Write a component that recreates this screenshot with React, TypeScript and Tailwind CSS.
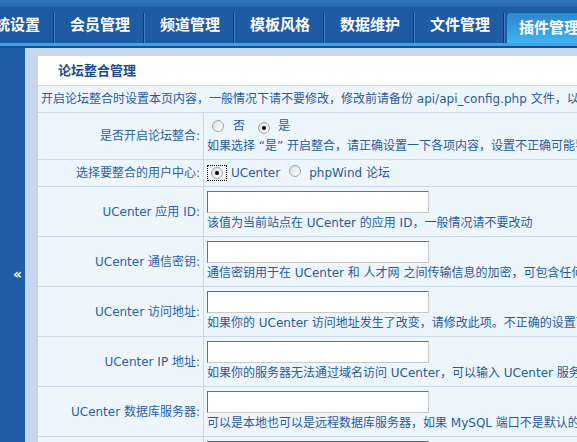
import React from 'react';

const font = { fontFamily: '"DejaVu Sans", "Noto Sans CJK SC", sans-serif' };

const tabs = ['系统设置', '会员管理', '频道管理', '模板风格', '数据维护', '文件管理'];

function Radio({ checked }: { checked?: boolean }) {
  return (
    <span className="inline-flex w-[12px] h-[12px] rounded-full border border-[#a3a3a3] bg-gradient-to-br from-[#dcdcdc] to-white items-center justify-center shrink-0">
      {checked && <span className="w-[4px] h-[4px] rounded-full bg-black" />}
    </span>
  );
}

function Input() {
  return (
    <div className="w-[222px] h-[22px] bg-white border border-t-[#6f6f6f] border-l-[#6f6f6f] border-r-[#c8c8c8] border-b-[#c8c8c8]" />
  );
}

function Row({
  label,
  h,
  top,
  children,
}: {
  label: string;
  h: string;
  top?: boolean;
  children: React.ReactNode;
}) {
  return (
    <div className={`flex border-b border-[#cad9ea] ${h}`}>
      <div className="w-[166px] shrink-0 flex items-center justify-end pr-[3px] border-r border-[#cad9ea] text-[#2c5ea6] whitespace-nowrap">
        {label}
      </div>
      <div
        className={`flex-1 flex flex-col pl-[3px] whitespace-nowrap overflow-hidden ${
          top ? 'justify-start pt-[4px]' : 'justify-center'
        }`}
      >
        {children}
      </div>
    </div>
  );
}

function InputRow({ label, hint }: { label: string; hint: string }) {
  return (
    <Row label={label} h="h-[50px]" top>
      <Input />
      <div className="mt-[1px] leading-[18px] text-[#2a5a9c]">{hint}</div>
    </Row>
  );
}

export default function App() {
  return (
    <div className="w-[577px] h-[442px] overflow-hidden bg-[#c4d7ef] text-[12px]" style={font}>
      <div className="h-[7px] bg-gradient-to-b from-[#2f76bd] to-[#2465ad]" />
      <div className="h-[36px] bg-[#1d5ba4] flex">
        <div className="flex ml-[-35px]">
          {tabs.map((t) => (
            <div key={t} className="w-[90px] flex items-center justify-center relative">
              <span className="text-white font-bold text-[15px]">{t}</span>
              <span className="absolute right-0 top-[6px] bottom-0 w-[2px] flex">
                <span className="w-[1px] bg-[#0e3a70]" />
                <span className="w-[1px] bg-[#3d7ec6]" />
              </span>
            </div>
          ))}
          <div className="w-[100px] ml-[2px] mt-[6px] bg-gradient-to-b from-[#2d86d0] to-[#43b2ef] flex items-center pl-[12px] rounded-tl-[3px]">
            <span className="text-white font-bold text-[15px] whitespace-nowrap">插件管理</span>
          </div>
        </div>
      </div>
      <div className="h-[3px] bg-[#37a6ea]" />
      <div className="h-[2px] bg-[#1a4f90]" />
      <div className="flex h-[394px]">
        <div className="w-[25px] shrink-0 bg-[#1f5ea6] flex items-center justify-center pl-[10px] pt-[58px]">
          <span className="text-white font-bold text-[14px] leading-none" style={{ fontFamily: '"DejaVu Sans", sans-serif' }}>«</span>
        </div>
        <div className="flex-1 pl-[13px] pt-[8px] overflow-hidden">
          <div className="bg-[#eef6fd] h-full overflow-hidden">
            <div className="h-[30px] bg-white flex items-center pl-[20px] border-b border-[#cad9ea]">
              <span className="font-bold text-[13px] text-[#1b4c8e]">论坛整合管理</span>
            </div>
            <div className="h-[27px] flex items-center pl-[3px] border-b border-[#cad9ea] whitespace-nowrap text-[#2a5a9c]">
              开启论坛整合时设置本页内容，一般情况下请不要修改，修改前请备份 api/api_config.php 文件，以免修改错误导致整合失败
            </div>
            <Row label="是否开启论坛整合:" h="h-[47px]">
              <div className="flex items-center h-[20px] pl-[5px] text-[#2a5a9c]">
                <Radio />
                <span className="ml-[9px]">否</span>
                <span className="ml-[13px]"><Radio checked /></span>
                <span className="ml-[8px]">是</span>
              </div>
              <div className="leading-[20px] text-[#2a5a9c]">
                如果选择 “是” 开启整合，请正确设置一下各项内容，设置不正确可能导致无法登录
              </div>
            </Row>
            <Row label="选择要整合的用户中心:" h="h-[27px]">
              <div className="flex items-center text-[#2a5a9c]">
                <span className="inline-flex w-[20px] h-[16px] items-center justify-center border border-dotted border-black">
                  <Radio checked />
                </span>
                <span className="ml-[4px]">UCenter</span>
                <span className="ml-[9px]"><Radio /></span>
                <span className="ml-[8px]">phpWind 论坛</span>
              </div>
            </Row>
            <InputRow label="UCenter 应用  ID:" hint="该值为当前站点在 UCenter 的应用 ID，一般情况请不要改动" />
            <InputRow label="UCenter 通信密钥:" hint="通信密钥用于在 UCenter 和 人才网 之间传输信息的加密，可包含任何字母及数字" />
            <InputRow label="UCenter 访问地址:" hint="如果你的 UCenter 访问地址发生了改变，请修改此项。不正确的设置可能导致站点功能异常" />
            <InputRow label="UCenter IP 地址:" hint="如果你的服务器无法通过域名访问 UCenter，可以输入 UCenter 服务器的 IP 地址" />
            <InputRow label="UCenter 数据库服务器:" hint="可以是本地也可以是远程数据库服务器，如果 MySQL 端口不是默认的 3306" />
            <InputRow label="UCenter 数据库用户名:" hint="" />
          </div>
        </div>
      </div>
    </div>
  );
}
